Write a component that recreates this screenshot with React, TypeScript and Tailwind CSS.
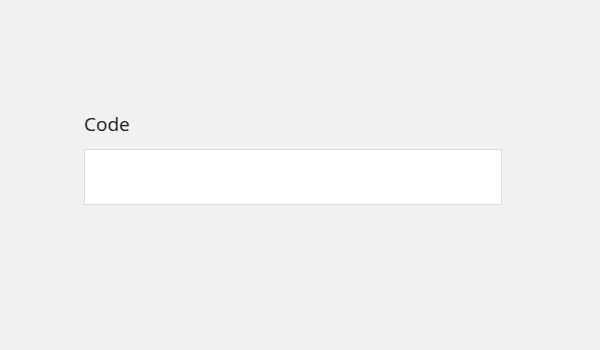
export default function App() {
  return (
    <div
      className="min-h-[350px] w-full bg-[#f1f1f1] pl-[84px] pt-[111px]"
      style={{ fontFamily: '"Open Sans", "Noto Sans", sans-serif' }}
    >
      <label htmlFor="code" className="mb-3 block text-[19px] leading-[26px] text-[#1e1e1e]">
        Code
      </label>
      <input
        id="code"
        type="text"
        className="block h-[56px] w-[418px] border border-[#dcdcdc] bg-white px-3 text-base outline-none"
      />
    </div>
  );
}
